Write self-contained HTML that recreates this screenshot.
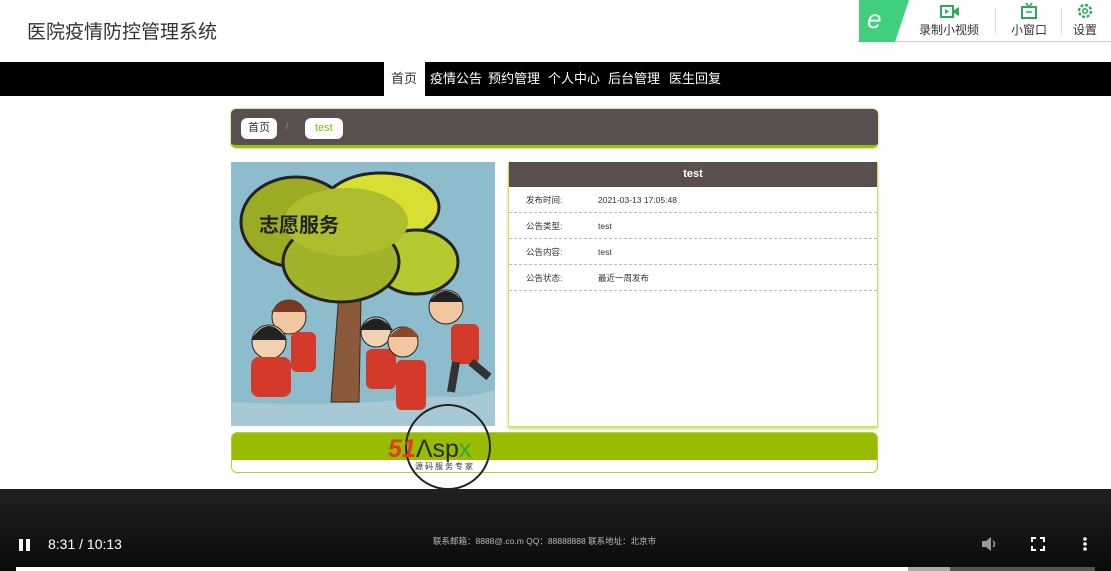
<!DOCTYPE html>
<html><head><meta charset="utf-8"><style>
*{margin:0;padding:0;box-sizing:border-box}
body{width:1111px;height:571px;overflow:hidden;background:#fff;font-family:"Liberation Sans","Noto Sans CJK SC",sans-serif;position:relative}
.title{position:absolute;left:27px;top:17px;font-size:19px;color:#333}
.tb{position:absolute;top:0;right:0;height:42px;width:254px;border-bottom:1px solid #ccc;background:#fff}
.nav{position:absolute;top:62px;left:0;width:1111px;height:34px;background:#000}
.nav span{position:absolute;top:0;height:34px;line-height:34px;font-size:13px;color:#fff}
.bc{position:absolute;left:231px;top:109px;width:647px;height:39px;background:#584f4e;border-radius:5px;border-bottom:3px solid #9bbd10;box-shadow:0 0 2px #9bbd10}
.bc .p{position:absolute;top:9px;height:21px;background:#fff;border-radius:6px;font-size:11px;line-height:21px;padding:0 7px}
.info{position:absolute;left:508px;top:162px;width:370px;height:265px;border:1px solid #cbe06a;border-top:none;box-shadow:0 2px 3px #cbe06a}
.info .h{height:25px;background:#584f4e;color:#fff;font-weight:bold;font-size:11px;text-align:center;line-height:24px}
.row{height:26px;border-bottom:1px dashed #bbb;font-size:8.5px;color:#333;line-height:26px;position:relative}
.row .k{position:absolute;left:17px}.row .v{position:absolute;left:89px}
.foot{position:absolute;left:231px;top:432px;width:647px;height:41px;border:1px solid #b5cf3a;border-radius:6px;overflow:hidden}
.foot div{height:27px;background:#97bc00}
.vid{position:absolute;left:0;top:489px;width:1111px;height:82px;background:linear-gradient(#202022,#0a0a0a)}
</style></head><body>
<div class="title">医院疫情防控管理系统</div>
<div class="tb">
 <svg width="50" height="42" style="position:absolute;left:2px;top:0"><polygon points="0,0 50,0 36,42 0,42" fill="#3fcf7f"/><text x="8" y="28" font-size="26" fill="#fff" font-family="Liberation Sans" font-style="italic">e</text></svg>
 <svg width="20" height="16" style="position:absolute;left:83px;top:4px"><rect x="1" y="2" width="12" height="11" fill="none" stroke="#2fa85a" stroke-width="2"/><polygon points="5,5 9,7.5 5,10" fill="#2fa85a"/><polygon points="14,6 19,3 19,12 14,9" fill="#2fa85a"/></svg>
 <div style="position:absolute;left:62px;top:21px;font-size:12px;color:#333">录制小视频</div>
 <div style="position:absolute;left:138px;top:8px;height:26px;border-left:1px solid #ddd"></div>
 <svg width="18" height="18" style="position:absolute;left:163px;top:2px"><rect x="2" y="5" width="14" height="11" fill="none" stroke="#2fa85a" stroke-width="2"/><path d="M6 1l3 4 3-4M6 10h6" stroke="#2fa85a" stroke-width="1.6" fill="none"/></svg>
 <div style="position:absolute;left:154px;top:21px;font-size:12px;color:#333">小窗口</div>
 <div style="position:absolute;left:204px;top:8px;height:26px;border-left:1px solid #ddd"></div>
 <svg width="18" height="18" style="position:absolute;left:219px;top:2px"><circle cx="9" cy="9" r="6" fill="none" stroke="#2fa85a" stroke-width="2.4" stroke-dasharray="3 1.7"/><circle cx="9" cy="9" r="2.3" fill="none" stroke="#2fa85a" stroke-width="1.5"/></svg>
 <div style="position:absolute;left:216px;top:21px;font-size:12px;color:#333">设置</div>
</div>
<div class="nav">
 <div style="position:absolute;left:384px;top:0;width:41px;height:34px;background:#fff"></div>
 <span style="left:391px;color:#333">首页</span>
 <span style="left:430px">疫情公告</span><span style="left:488px">预约管理</span><span style="left:548px">个人中心</span><span style="left:608px">后台管理</span><span style="left:669px">医生回复</span>
</div>
<div class="bc"><div class="p" style="left:10px;color:#333">首页</div><span style="position:absolute;left:55px;top:12px;color:#999;font-size:9px">/</span><div class="p" style="left:74px;color:#8db40c;padding:0 10px">test</div></div>
<svg style="position:absolute;left:231px;top:162px" width="264" height="264">
 <rect width="264" height="264" fill="#8dbccd"/>
 <path d="M210 234 Q230 238 264 228 V264 H0 V240 Q100 246 210 234Z" fill="#a7c9d6"/>
 <path d="M100 240 L108 130 L96 100 L110 108 L120 80 L125 110 L140 90 L130 135 L128 240Z" fill="#8a5a3a" stroke="#3a2a1a"/>
 <ellipse cx="150" cy="45" rx="58" ry="34" fill="#d7df33" stroke="#222" stroke-width="3"/>
 <ellipse cx="185" cy="100" rx="42" ry="32" fill="#b7c930" stroke="#222" stroke-width="3"/>
 <ellipse cx="65" cy="60" rx="55" ry="45" fill="#9bab24" stroke="#222" stroke-width="3"/>
 <ellipse cx="110" cy="100" rx="58" ry="40" fill="#a2b22a" stroke="#222" stroke-width="3"/>
 <ellipse cx="115" cy="60" rx="62" ry="34" fill="#aebd2e"/>
 <text x="28" y="70" font-size="20" font-weight="bold" fill="#222" font-family="Noto Sans CJK SC,sans-serif">志愿服务</text>
 <circle cx="58" cy="155" r="17" fill="#f2c7a0" stroke="#222"/><path d="M40 150 Q58 125 76 150" fill="#7a3a20"/>
 <circle cx="38" cy="180" r="17" fill="#f2d1b0" stroke="#222"/><path d="M20 178 Q38 150 56 178" fill="#222"/>
 <rect x="20" y="195" width="40" height="40" rx="8" fill="#d43a2a"/><rect x="60" y="170" width="25" height="40" rx="6" fill="#d43a2a"/>
 <circle cx="145" cy="170" r="15" fill="#f2d1b0" stroke="#222"/><path d="M128 168 Q145 145 162 168" fill="#222"/>
 <rect x="135" y="187" width="30" height="40" rx="6" fill="#d43a2a"/>
 <circle cx="172" cy="180" r="15" fill="#f2c7a0" stroke="#222"/><path d="M158 175 Q175 155 188 175" fill="#8a4a2a"/>
 <rect x="165" y="198" width="30" height="50" rx="6" fill="#d43a2a"/>
 <circle cx="215" cy="145" r="17" fill="#f2c7a0" stroke="#222"/><path d="M198 140 Q215 118 232 140" fill="#222"/>
 <rect x="220" y="162" width="28" height="40" rx="6" fill="#d43a2a"/><path d="M225 200 L220 230 M240 200 L258 215" stroke="#333" stroke-width="8"/>
</svg>
<div class="info"><div class="h">test</div>
 <div class="row"><span class="k">发布时间:</span><span class="v">2021-03-13 17:05:48</span></div>
 <div class="row"><span class="k">公告类型:</span><span class="v">test</span></div>
 <div class="row"><span class="k">公告内容:</span><span class="v">test</span></div>
 <div class="row"><span class="k">公告状态:</span><span class="v">最近一周发布</span></div>
</div>
<div class="foot"><div></div></div>
<svg style="position:absolute;left:385px;top:400px" width="130" height="95">
 <circle cx="63" cy="47" r="42" fill="none" stroke="#222" stroke-width="2"/>
 <text x="3" y="57" font-size="25" font-weight="bold" font-family="Liberation Sans" font-style="italic"><tspan fill="#e53d1b">51</tspan><tspan fill="#2a2a2a" font-weight="normal" font-style="normal">Λsp</tspan><tspan fill="#3aa63a" font-weight="normal" font-style="normal">x</tspan></text>
 <text x="30" y="69" font-size="8" fill="#333" font-family="Noto Sans CJK SC,sans-serif" letter-spacing="2">源码服务专家</text>
</svg>
<div class="vid">
 <div style="position:absolute;left:19px;top:50px;width:4px;height:12px;background:#fff"></div>
 <div style="position:absolute;left:26px;top:50px;width:4px;height:12px;background:#fff"></div>
 <div style="position:absolute;left:48px;top:47px;font-size:14px;color:#fff">8:31 / 10:13</div>
 <div style="position:absolute;left:433px;top:46px;font-size:8.5px;color:#bbb">联系邮箱：8888@.co.m QQ：88888888 联系地址：北京市</div>
 <svg style="position:absolute;left:980px;top:47px" width="20" height="16"><polygon points="2,5 6,5 11,1 11,15 6,11 2,11" fill="#999"/><path d="M13 5q3 3 0 6" stroke="#999" fill="none" stroke-width="1.5"/></svg>
 <svg style="position:absolute;left:1031px;top:48px" width="14" height="14"><path d="M1 5V1h4M9 1h4v4M13 9v4H9M5 13H1V9" stroke="#fff" stroke-width="2" fill="none"/></svg>
 <svg style="position:absolute;left:1082px;top:47px" width="6" height="16"><circle cx="3" cy="3" r="1.8" fill="#fff"/><circle cx="3" cy="8" r="1.8" fill="#fff"/><circle cx="3" cy="13" r="1.8" fill="#fff"/></svg>
 <div style="position:absolute;left:16px;top:78px;width:892px;height:4px;background:#fff"></div>
 <div style="position:absolute;left:908px;top:78px;width:42px;height:4px;background:#aaa"></div>
 <div style="position:absolute;left:950px;top:78px;width:145px;height:4px;background:#555"></div>
</div>
</body></html>
